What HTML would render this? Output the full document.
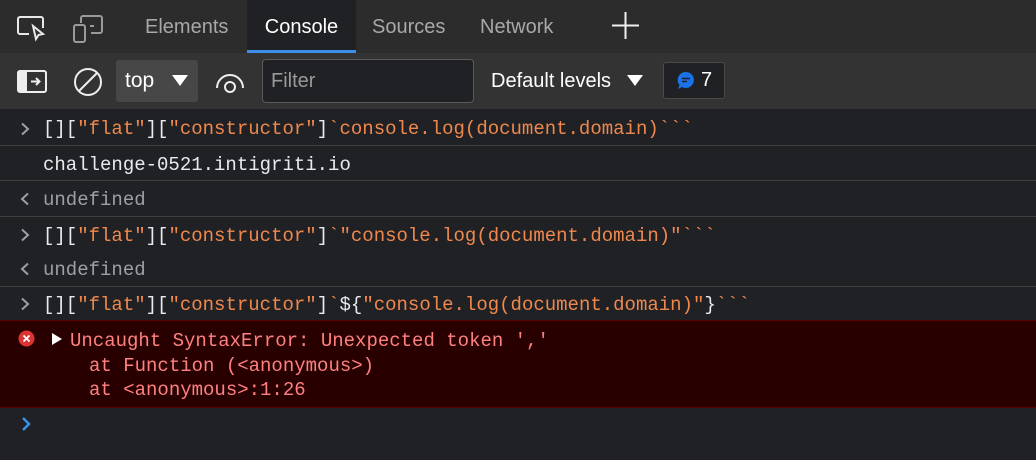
<!DOCTYPE html>
<html><head><meta charset="utf-8"><style>
*{margin:0;padding:0;box-sizing:border-box}
body{width:1036px;height:460px;overflow:hidden;background:#202124;font-family:"Liberation Sans",sans-serif;position:relative}
.tabbar{position:absolute;left:0;top:0;width:1036px;height:53px;background:#2c2c2c}
.tab{position:absolute;top:0;height:53px;line-height:55px;font-size:20px;color:#a8a8a8}
.tool{position:absolute;left:0;top:53px;width:1036px;height:56px;background:#333}
.mono{font-family:"Liberation Mono",monospace;font-size:19px}
.row{position:absolute;left:0;width:1036px;border-bottom:1px solid #3d3d3d}
.row span.t{position:absolute;left:43px;white-space:pre}
.w{color:#e8eaed}.o{color:#f0884e}.g{color:#9aa0a6}
.chev{position:absolute;left:20px}
</style></head><body>
<div class="tabbar">
 <svg style="position:absolute;left:16px;top:15px" width="30" height="28" viewBox="0 0 30 28" fill="none" stroke="#e8e8e8" stroke-width="2"><path d="M13 19H4a2 2 0 0 1-2-2V4a2 2 0 0 1 2-2h21a2 2 0 0 1 2 2v9"/><path d="M17 11l3 13 2.5-4 4.5-1z" fill="#2c2c2c"/></svg>
 <svg style="position:absolute;left:72px;top:15px" width="32" height="28" viewBox="0 0 32 28" fill="none" stroke="#9a9a9a" stroke-width="2"><path d="M9 8V3a2 2 0 0 1 2-2h17a2 2 0 0 1 2 2v13a2 2 0 0 1-2 2H19"/><rect x="2" y="10" width="11" height="17" rx="2"/><path d="M18 11h4"/></svg>
 <div class="tab" style="left:145px">Elements</div>
 <div class="tab" style="left:247px;width:109px;background:#202124;color:#fff;text-align:center;border-bottom:3px solid #3b8eea;line-height:55px">Console</div>
 <div class="tab" style="left:372px">Sources</div>
 <div class="tab" style="left:480px">Network</div>
 <svg style="position:absolute;left:612px;top:12px" width="27" height="27"><path d="M13.5 0v27M0 13.5h27" stroke="#f0f0f0" stroke-width="2"/></svg>
</div>
<div class="tool">
 <svg style="position:absolute;left:17px;top:17px" width="30" height="23" viewBox="0 0 30 23"><rect x="1" y="1" width="28" height="21" rx="2" fill="none" stroke="#eee" stroke-width="2"/><rect x="1" y="1" width="9" height="21" fill="#eee"/><path d="M14 11.5h8M19 8l3.5 3.5L19 15" stroke="#eee" stroke-width="2" fill="none"/></svg>
 <svg style="position:absolute;left:73px;top:14px" width="30" height="30"><circle cx="15" cy="15" r="13" fill="none" stroke="#eee" stroke-width="2"/><path d="M6 24L24 6" stroke="#eee" stroke-width="2"/></svg>
 <div style="position:absolute;left:116px;top:7px;width:82px;height:42px;background:#474747;border-radius:3px;color:#fff;font-size:21px;line-height:42px;padding-left:9px">top<span style="position:absolute;left:56px;top:15px;width:0;height:0;border-left:8px solid transparent;border-right:8px solid transparent;border-top:11px solid #fff"></span></div>
 <svg style="position:absolute;left:215px;top:17px" width="30" height="24"><path d="M2 18a13 13 0 0 1 26 0" fill="none" stroke="#eee" stroke-width="2"/><circle cx="15" cy="17" r="5" fill="none" stroke="#eee" stroke-width="2"/></svg>
 <div style="position:absolute;left:262px;top:6px;width:212px;height:44px;background:#202124;border:1px solid #5a5a5a;border-radius:4px;color:#9a9a9a;font-size:20px;line-height:42px;padding-left:8px">Filter</div>
 <div style="position:absolute;left:491px;top:6px;color:#fff;font-size:20px;line-height:44px">Default levels</div>
 <span style="position:absolute;left:627px;top:22px;border-left:8px solid transparent;border-right:8px solid transparent;border-top:11px solid #fff"></span>
 <div style="position:absolute;left:663px;top:9px;width:62px;height:37px;background:#202124;border:1px solid #4a4a4a;border-radius:3px"></div>
 <svg style="position:absolute;left:677px;top:18px" width="18" height="19"><path d="M9 1a8 8 0 1 1-4 15L1 18l1.5-4A8 8 0 0 1 9 1z" fill="#1a73e8"/><path d="M5 7.5h8M5 10.5h5" stroke="#202124" stroke-width="1.6"/></svg>
 <div style="position:absolute;left:701px;top:9px;color:#fff;font-size:20px;line-height:37px">7</div>
</div>
<div class="mono">
 <div class="row" style="top:110px;height:36px"><svg class="chev" style="top:12px" width="10" height="14"><path d="M2 1.5l6 5.5-6 5.5" stroke="#9aa0a6" stroke-width="2" fill="none"/></svg><span class="t" style="top:8px"><span class="w">[][</span><span class="o">"flat"</span><span class="w">][</span><span class="o">"constructor"</span><span class="w">]</span><span class="o">&#96;console.log(document.domain)&#96;&#96;&#96;</span></span></div>
 <div class="row" style="top:146px;height:35px"><span class="t w" style="top:8px">challenge-0521.intigriti.io</span></div>
 <div class="row" style="top:181px;height:36px"><svg class="chev" style="top:11px" width="10" height="14"><path d="M8 1.5L2 7l6 5.5" stroke="#9aa0a6" stroke-width="2" fill="none"/></svg><span class="t g" style="top:8px">undefined</span></div>
 <div class="row" style="top:217px;height:35px;border:0"><svg class="chev" style="top:11px" width="10" height="14"><path d="M2 1.5l6 5.5-6 5.5" stroke="#9aa0a6" stroke-width="2" fill="none"/></svg><span class="t" style="top:8px"><span class="w">[][</span><span class="o">"flat"</span><span class="w">][</span><span class="o">"constructor"</span><span class="w">]</span><span class="o">&#96;"console.log(document.domain)"&#96;&#96;&#96;</span></span></div>
 <div class="row" style="top:252px;height:35px"><svg class="chev" style="top:10px" width="10" height="14"><path d="M8 1.5L2 7l6 5.5" stroke="#9aa0a6" stroke-width="2" fill="none"/></svg><span class="t g" style="top:7px">undefined</span></div>
 <div class="row" style="top:287px;height:33px;border:0"><svg class="chev" style="top:10px" width="10" height="14"><path d="M2 1.5l6 5.5-6 5.5" stroke="#9aa0a6" stroke-width="2" fill="none"/></svg><span class="t" style="top:7px"><span class="w">[][</span><span class="o">"flat"</span><span class="w">][</span><span class="o">"constructor"</span><span class="w">]</span><span class="o">&#96;</span><span class="w">${</span><span class="o">"console.log(document.domain)"</span><span class="w">}</span><span class="o">&#96;&#96;&#96;</span></span></div>
 <div style="position:absolute;left:0;top:320px;width:1036px;height:88px;background:#290000;border-top:1px solid #5c0000;border-bottom:1px solid #5c0000;color:#ff8080">
  <svg style="position:absolute;left:18px;top:9px" width="17" height="17"><circle cx="8.5" cy="8.5" r="8" fill="#d33"/><path d="M5.5 5.5l6 6M11.5 5.5l-6 6" stroke="#fff" stroke-width="1.8"/></svg>
  <span style="position:absolute;left:52px;top:12px;border-top:6px solid transparent;border-bottom:6px solid transparent;border-left:10px solid #fff"></span>
  <div style="position:absolute;left:70px;top:8px;white-space:pre;line-height:24.5px">Uncaught SyntaxError: Unexpected token ','</div>
  <div style="position:absolute;left:89px;top:32.5px;white-space:pre;line-height:24.5px">at Function (&lt;anonymous&gt;)
at &lt;anonymous&gt;:1:26</div>
 </div>
 <svg style="position:absolute;left:20px;top:416px" width="12" height="16"><path d="M3 2l6 6-6 6" stroke="#3b8eea" stroke-width="2.5" fill="none"/></svg>
</div>
</body></html>
